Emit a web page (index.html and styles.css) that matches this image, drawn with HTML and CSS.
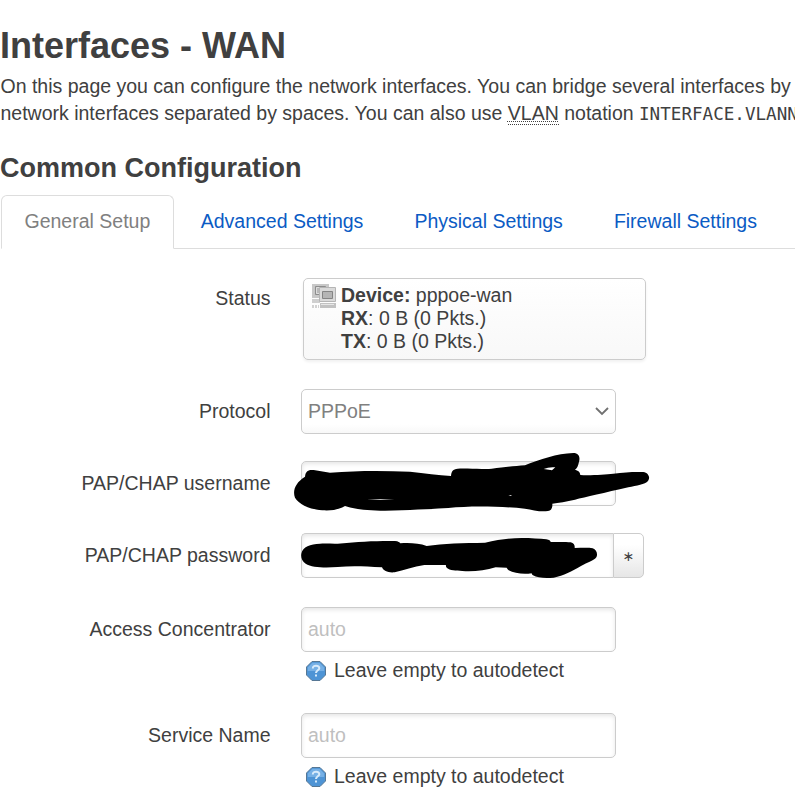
FILE: index.html
```html
<!DOCTYPE html>
<html lang="en">
<head>
    <meta charset="UTF-8">
    <meta name="viewport" content="width=device-width, initial-scale=1.0">
    <title>Interfaces - WAN</title>
    <link rel="stylesheet" href="styles.css">
</head>
<body>
    <h2>Interfaces - WAN</h2>
    <p class="descr">On this page you can configure the network interfaces. You can bridge several interfaces by<br>
    network interfaces separated by spaces. You can also use <abbr>VLAN</abbr> notation <code>INTERFACE.VLANN</code></p>

    <h3>Common Configuration</h3>
    <ul class="tabs">
        <li class="active"><a>General Setup</a></li>
        <li><a>Advanced Settings</a></li>
        <li><a>Physical Settings</a></li>
        <li><a>Firewall Settings</a></li>
    </ul>

    <form class="section">
        <div class="row row-status">
            <label>Status</label>
            <div class="status">
                <svg class="status-icon" width="25" height="25" viewBox="0 0 25 25">
                    <path d="M0 0h17v14H0z" fill="#c8c8c8"/>
                    <path d="M3.500 2.500h10v8h-10z" fill="#b8b8b8" stroke="#8d8d8d"/>
                    <path d="M4.500 3.500h8v6h-8z" fill="none" stroke="#ddd"/>
                    <path d="M0 15h8v4H0z" fill="#cfcfcf"/>
                    <path d="M7.500 3.500h16v14h-16z" fill="#dadada" stroke="#b5b5b5"/>
                    <path d="M10.500 7.500h10v7h-10z" fill="#b5b5b5" stroke="#858585"/>
                    <path d="M8 19h16v5H8z" fill="#c2c2c2"/>
                    <path d="M9 20h13v1H9z" fill="#e6e6e6"/>
                    <path d="M0 21h2v3H0zM3 21h2v3H3zM6 21h1v3H6z" fill="#d2d2d2"/>
                </svg>
                <div>
                    <strong>Device:</strong> pppoe-wan<br>
                    <strong>RX</strong>: 0 B (0 Pkts.)<br>
                    <strong>TX</strong>: 0 B (0 Pkts.)
                </div>
            </div>
        </div>

        <div class="row row-protocol">
            <label>Protocol</label>
            <div class="field select">
                <span>PPPoE</span>
                <svg width="14" height="9" viewBox="0 0 14 9"><path d="M1 1l6 6 6-6" fill="none" stroke="#707070" stroke-width="1.800"/></svg>
            </div>
        </div>

        <div class="row row-username">
            <label>PAP/CHAP username</label>
            <div class="control">
                <input class="field" type="text">
                <svg class="redact redact-user" viewBox="0 0 1125 216">
                    <path d="M60 95C62 76 72 74 86 75L135 83C220 76 300 77 375 80C420 84 460 91 498 93C499 79 504 72 518 71C560 70 580 74 620 71C660 66 690 63 720 61C765 43 815 26 865 24C882 24 886 37 882 50C879 63 876 70 870 74C882 77 885 82 886 90C920 92 960 88 985 86C1020 81 1050 80 1075 81C1090 83 1097 98 1089 108C1080 118 1055 122 1030 127C960 143 900 157 870 164C845 169 820 174 802 176C803 191 798 199 782 199C760 200 740 194 720 191C650 184 560 181 490 189C430 193 370 195 300 197C250 197 215 194 180 183C160 194 138 198 112 196C75 193 42 178 30 158C22 137 31 113 60 95Z"/>
                    <path d="M776 72Q792 65 811 67L801 76ZM246 163Q285 161 328 163Q285 165 246 163ZM670 152l9-2v3Z" fill="#fff"/>
                </svg>
            </div>
        </div>

        <div class="row row-password">
            <label>PAP/CHAP password</label>
            <div class="control">
                <input class="field field-pass" type="text"><button class="reveal" type="button">∗</button>
                <svg class="redact redact-pass" viewBox="0 249 1125 159">
                    <path d="M49 326C53 305 76 297 105 296C135 295 155 298 185 294C230 289 285 288 330 288C340 289 344 292 346 295C375 293 402 295 425 303C475 295 535 294 600 293C640 284 675 279 710 279C738 279 765 281 784 283C793 285 796 287 797 291C817 291 840 290 857 292C867 295 870 301 869 309C890 309 908 307 923 310C935 315 939 327 934 337C927 347 907 353 888 363C860 379 837 392 806 398C783 401 757 399 744 391C741 389 740 387 740 385C715 389 687 385 671 376C667 372 666 370 665 368L632 367C600 377 565 380 532 378C512 377 494 376 486 369C483 366 482 363 483 360H418C385 365 357 375 329 382C309 384 296 378 291 367C240 364 200 362 158 366C120 369 81 368 62 356C51 349 47 338 49 326Z"/>
                </svg>
            </div>
        </div>

        <div class="row row-ac">
            <label>Access Concentrator</label>
            <div>
                <input class="field" type="text" placeholder="auto">
                <div class="help">
                    <svg width="20" height="20" viewBox="0 0 20 20">
                        <path d="M6 .5h8L19.500 6v8L14 19.500H6L.5 14V6z" fill="#4e94d5" stroke="#567794"/>
                        <path d="M6.400 1.800h7.200l4.600 4.600V10H1.800V6.400z" fill="#76b0e5"/>
                        <path d="M6.800 7.500c0-4 6.700-3.500 6.500-.3C13.200 9.300 10 9.300 10 12M10 13.500v2" fill="none" stroke="#d8ebfb" stroke-width="2"/>
                    </svg>
                    <span>Leave empty to autodetect</span>
                </div>
            </div>
        </div>

        <div class="row row-service">
            <label>Service Name</label>
            <div>
                <input class="field" type="text" placeholder="auto">
                <div class="help">
                    <svg width="20" height="20" viewBox="0 0 20 20">
                        <path d="M6 .5h8L19.500 6v8L14 19.500H6L.5 14V6z" fill="#4e94d5" stroke="#567794"/>
                        <path d="M6.400 1.800h7.200l4.600 4.600V10H1.800V6.400z" fill="#76b0e5"/>
                        <path d="M6.800 7.500c0-4 6.700-3.500 6.500-.3C13.200 9.300 10 9.300 10 12M10 13.500v2" fill="none" stroke="#d8ebfb" stroke-width="2"/>
                    </svg>
                    <span>Leave empty to autodetect</span>
                </div>
            </div>
        </div>
    </form>
</body>
</html>
```
FILE: styles.css
```css
* {
    box-sizing: border-box;
}

body {
    margin: 0;
    padding: 19px 0 0 1px;
    height: 801px;
    overflow: hidden;
    background-color: #fff;
    color: #404040;
    font-family: "Liberation Sans", Arial, sans-serif;
    font-size: 19.5px;
    line-height: 27px;
}

h2 {
    margin: 0 0 0 -1px;
    font-size: 36px;
    line-height: 54px;
}

h3 {
    margin: 0 0 0 -1px;
    font-size: 27px;
    line-height: 54px;
}

.descr {
    margin: 0 0 14px -0.5px;
    height: 54px;
    white-space: nowrap;
}

abbr {
    text-decoration: underline dotted 1px;
    border-bottom: 1px dotted #404040;
}

code {
    font-family: "DejaVu Sans Mono", monospace;
    font-size: 17.6px;
    line-height: 1;
}

/* tabs */
.tabs {
    display: flex;
    gap: 3px;
    height: 54px;
    margin: 0 0 29px;
    padding: 0;
    list-style: none;
    border-bottom: 1px solid #ddd;
}

.tabs li {
    height: 54px;
    padding: 0 23px;
    border: 1px solid transparent;
    line-height: 51px;
    white-space: nowrap;
}

.tabs a {
    color: #0b5bc4;
}

.tabs .active {
    padding: 0 22.5px;
    background-color: #fff;
    border-color: #ddd;
    border-bottom-color: #fff;
    border-radius: 6px 6px 0 0;
}

.tabs .active a {
    color: #808080;
}

/* form rows */
.section {
    display: flex;
    flex-direction: column;
}

.row {
    display: grid;
    grid-template-columns: 269.5px 1fr;
    column-gap: 30.5px;
    align-items: start;
}

.row label {
    padding-top: 9px;
    text-align: right;
}

.row-status {
    height: 111px;
}

.row-status label {
    padding-top: 7px;
}

.row-protocol,
.row-username {
    height: 72px;
}

.row-password {
    height: 74px;
}

.row-ac {
    height: 106px;
}

.status {
    display: flex;
    gap: 4px;
    width: 343px;
    height: 82px;
    margin-left: 2px;
    padding: 5px 8px;
    border: 1px solid #ccc;
    border-radius: 5px;
    background: linear-gradient(#fff, #f8f8f8);
    box-shadow: 0 2px 3px rgba(0, 0, 0, 0.06);
    line-height: 23px;
}

.field {
    display: block;
    width: 315px;
    height: 45px;
    padding: 0 6px;
    border: 1px solid #ccc;
    border-radius: 5px;
    outline: none;
    background-color: #fff;
    box-shadow: inset 0 2px 4px rgba(0, 0, 0, 0.1);
    color: #808080;
    font: inherit;
}

.field::placeholder {
    color: #bfbfbf;
    opacity: 1;
}

.select {
    display: flex;
    align-items: center;
    justify-content: space-between;
    box-shadow: none;
    background: linear-gradient(#fff 80%, #f8f8f8);
}

.control {
    position: relative;
    display: flex;
}

.field-pass {
    width: 312px;
    border-right: 0;
    border-radius: 5px 0 0 5px;
}

.reveal {
    width: 31px;
    height: 45px;
    padding: 0;
    border: 1px solid #ccc;
    border-radius: 0 5px 5px 0;
    background: linear-gradient(#fff 25%, #e6e6e6);
    color: #404040;
    font-family: "DejaVu Sans", sans-serif;
    font-size: 14px;
}

/* black marker over the credentials */
.redact {
    position: absolute;
    left: -16px;
    width: 375px;
    fill: #000;
}

.redact-user {
    top: -16px;
    height: 72px;
}

.redact-pass {
    top: -5px;
    height: 53px;
}

.help {
    display: flex;
    align-items: center;
    gap: 8px;
    margin-top: 5px;
    padding-left: 5px;
}
```
